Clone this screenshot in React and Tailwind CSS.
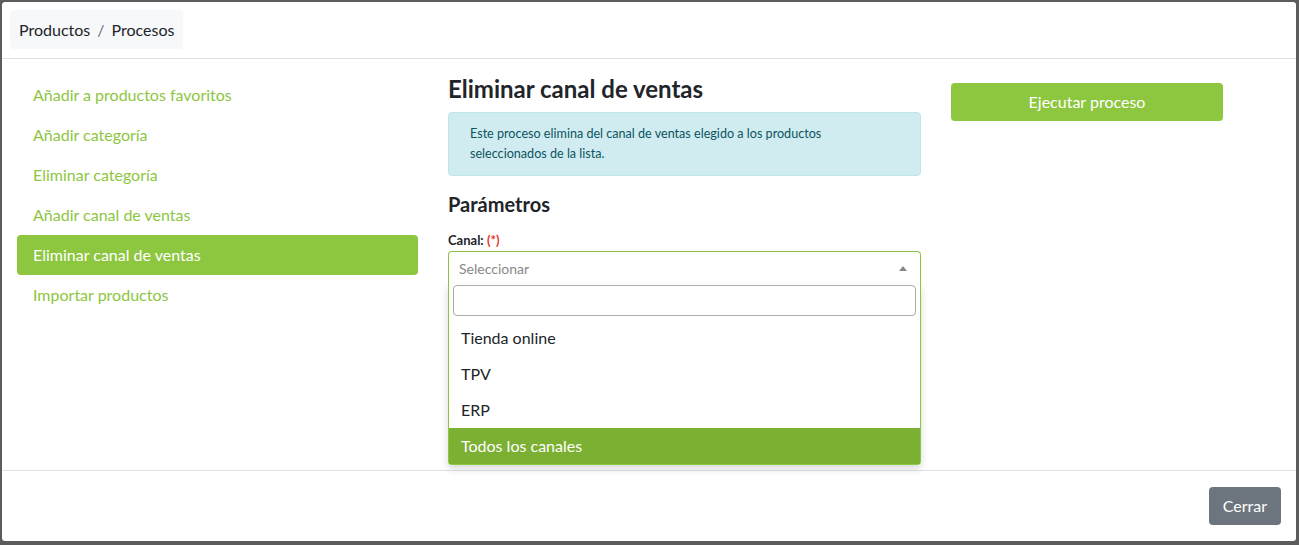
import { useState } from "react";

const menu = [
  "Añadir a productos favoritos",
  "Añadir categoría",
  "Eliminar categoría",
  "Añadir canal de ventas",
  "Eliminar canal de ventas",
  "Importar productos",
];

const options = ["Tienda online", "TPV", "ERP", "Todos los canales"];

export default function App() {
  const [active] = useState(4);
  const [hover] = useState(3);

  return (
    <div
      className="h-[545px] w-[1299px] bg-[#5c5c5c] pt-[2px] pl-[2px] overflow-hidden"
      style={{ fontFamily: "Lato, 'Open Sans', sans-serif" }}
    >
      <div className="w-[1294px] h-[539px] bg-white rounded-[3px] flex flex-col text-[#212529]">
        {/* Header */}
        <div className="h-[57px] border-b border-[#dee2e6] p-2 flex items-start">
          <div className="h-[39px] bg-[#f7f8fa] rounded px-[9px] flex items-center text-[16px] text-[#212529]">
            Productos <span className="mx-[7px] text-[#6c757d]">/</span> Procesos
          </div>
        </div>

        {/* Body */}
        <div className="h-[411px] px-[15px] pt-4 flex gap-[30px] relative">
          <div className="w-[401px] flex flex-col">
            {menu.map((m, i) => (
              <div
                key={m}
                className={`h-10 flex items-center px-4 rounded text-[16px] ${
                  i === active ? "bg-[#8dc63f] text-white" : "text-[#8dc63f]"
                }`}
              >
                {m}
              </div>
            ))}
          </div>

          <div className="w-[473px] flex flex-col">
            <h2 className="text-[24px] font-bold leading-[28px] mt-0">
              Eliminar canal de ventas
            </h2>
            <div className="mt-[9px] h-[64px] bg-[#d1ecf1] border border-[#bee5eb] rounded px-[21px] py-[11px] text-[12.6px] leading-[20px] text-[#0c5460]">
              Este proceso elimina del canal de ventas elegido a los productos
              seleccionados de la lista.
            </div>
            <h3 className="mt-[16px] text-[20px] font-bold leading-[24px]">
              Parámetros
            </h3>
            <div className="mt-[16px] text-[13px] font-bold leading-[16px]">
              Canal: <span className="text-[#e3342f] font-bold">(*)</span>
            </div>
            <div className="mt-[3px] relative">
              <div className="h-[33px] border border-[#8dc63f] border-b-0 rounded-t flex items-center justify-between pl-[10px] pr-[13px] text-[14px] text-[#888]">
                <span>Seleccionar</span>
                <span className="w-0 h-0 border-l-[4px] border-r-[4px] border-b-[5px] border-l-transparent border-r-transparent border-b-[#888]" />
              </div>
              <div className="absolute left-0 right-0 top-[33px] z-10 bg-white border border-[#8dc63f] border-t-0 rounded-b shadow-[0_4px_8px_rgba(0,0,0,0.15)]">
                <div className="p-1 pt-[1px]">
                  <div className="h-[31px] border border-[#aaa] rounded" />
                </div>
                <div>
                  {options.map((o, i) => (
                    <div
                      key={o}
                      className={`h-9 flex items-center px-3 text-[16px] ${
                        i === hover ? "bg-[#7cb033] text-white" : "text-[#212529]"
                      }`}
                    >
                      {o}
                    </div>
                  ))}
                </div>
              </div>
            </div>
          </div>

          <div className="w-[272px] pt-[8px]">
            <button className="w-full h-[38px] bg-[#8dc63f] text-white rounded text-[16px]">
              Ejecutar proceso
            </button>
          </div>
        </div>

        {/* Footer */}
        <div className="flex-1 border-t border-[#dee2e6] flex items-center justify-end pr-[15px]">
          <button className="h-[38px] px-[14px] bg-[#6c757d] text-white rounded text-[16px]">
            Cerrar
          </button>
        </div>
      </div>
    </div>
  );
}
